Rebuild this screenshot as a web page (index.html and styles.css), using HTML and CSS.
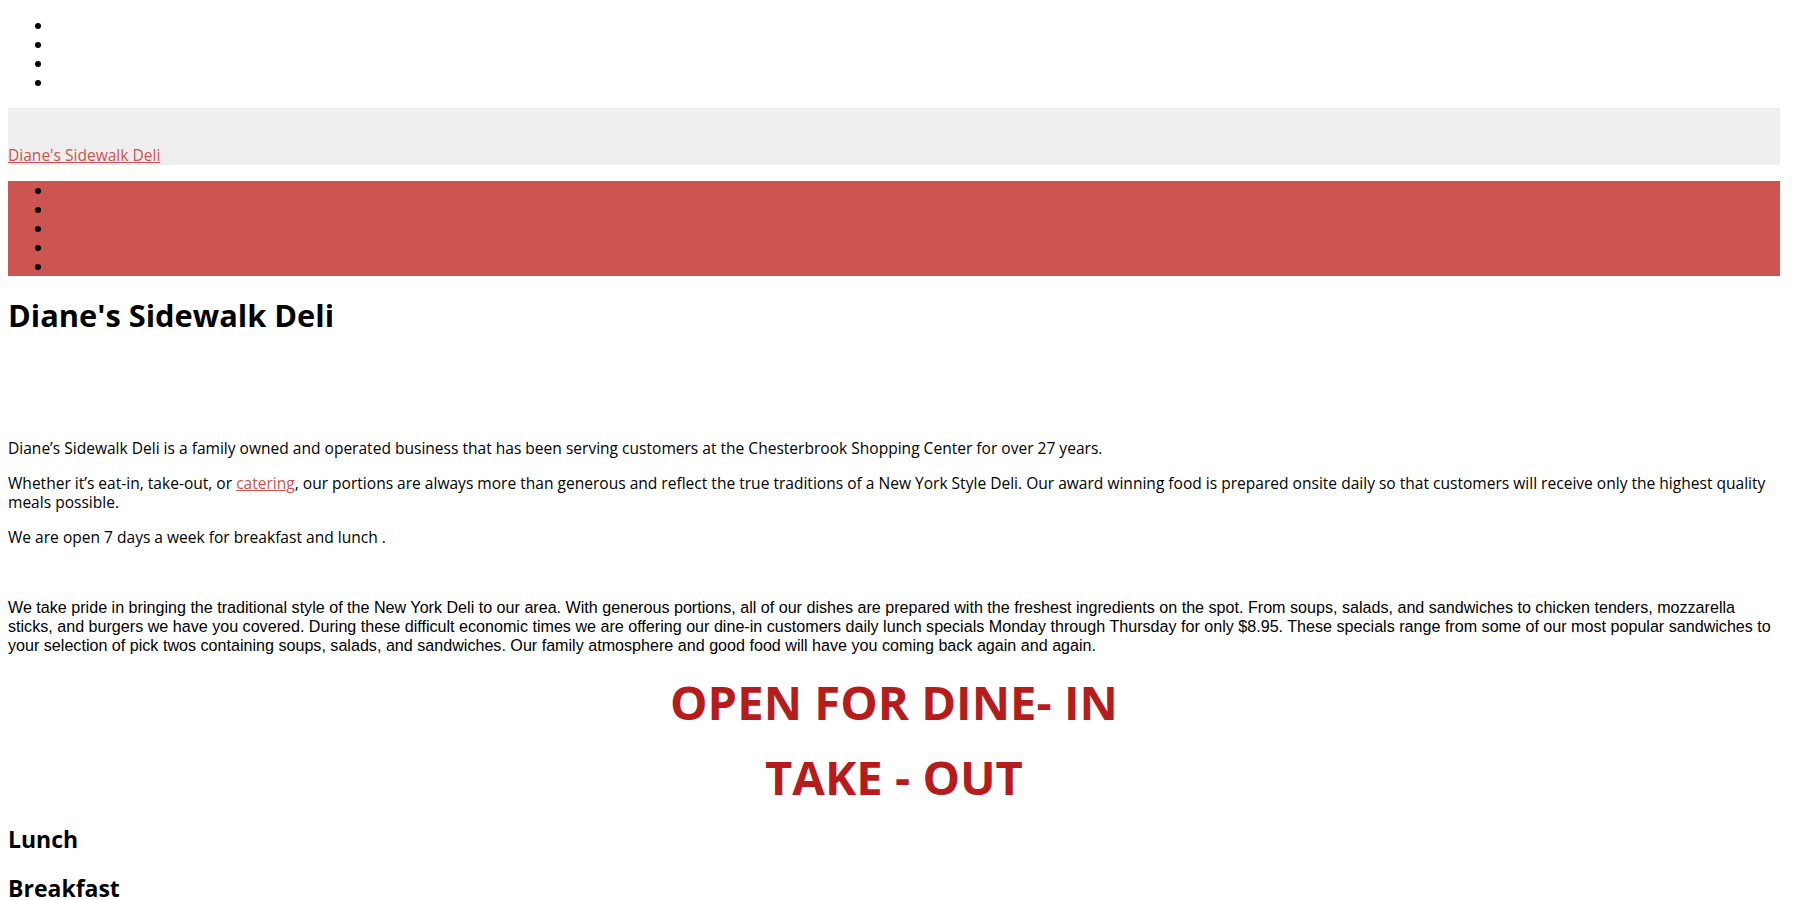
FILE: index.html
```html
<!DOCTYPE html>
<html lang="en">
<head>
<meta charset="utf-8">
<title>Diane's Sidewalk Deli</title>
<link rel="stylesheet" href="styles.css">
</head>
<body>
<div class="page">
  <ul class="top-links">
    <li></li>
    <li></li>
    <li></li>
    <li></li>
  </ul>
  <header class="masthead">
    <a class="brand" href="#">Diane's Sidewalk Deli</a>
  </header>
  <ul class="main-nav">
    <li></li>
    <li></li>
    <li></li>
    <li></li>
    <li></li>
  </ul>
  <main class="content">
    <h1 class="title">Diane's Sidewalk Deli</h1>
    <div class="spacer"></div>
    <p class="text">Diane’s Sidewalk Deli is a family owned and operated business that has been serving customers at the Chesterbrook Shopping Center for over 27 years.</p>
    <p class="text">Whether it’s eat-in, take-out, or <a class="link" href="#">catering</a>, our portions are always more than generous and reflect the true traditions of a New York Style Deli. Our award winning food is prepared onsite daily so that customers will receive only the highest quality meals possible.</p>
    <p class="text">We are open 7 days a week for breakfast and lunch .</p>
    <p class="text">&nbsp;</p>
    <p class="text arial">We take pride in bringing the traditional style of the New York Deli to our area. With generous portions, all of our dishes are prepared with the freshest ingredients on the spot. From soups, salads, and sandwiches to chicken tenders, mozzarella sticks, and burgers we have you covered. During these difficult economic times we are offering our dine-in customers daily lunch specials Monday through Thursday for only $8.95. These specials range from some of our most popular sandwiches to your selection of pick twos containing soups, salads, and sandwiches. Our family atmosphere and good food will have you coming back again and again.</p>
    <h2 class="banner">OPEN FOR DINE- IN</h2>
    <h2 class="banner">TAKE - OUT</h2>
    <h2 class="menu-head">Lunch</h2>
    <h2 class="menu-head">Breakfast</h2>
  </main>
</div>
</body>
</html>
```
FILE: styles.css
```css
html, body {
  background: #ffffff;
}
body {
  margin: 0 8px 8px;
  color: #000000;
  font-family: "Open Sans", "Noto Sans", sans-serif;
  font-size: 15.55px;
  line-height: 19px;
}
.page {
  width: 1772px;
}
.top-links {
  margin: 16px 0;
  padding-left: 45px;
  line-height: 19px;
}
.top-links li {
  height: 19px;
}
.masthead {
  background: #eeeeee;
  padding-top: 38px;
  margin: 0 0 16px;
  line-height: 19px;
}
.brand {
  color: #cc5451;
  text-decoration: underline;
}
.main-nav {
  background: #cc5451;
  margin: 16px 0;
  padding-left: 45px;
}
.main-nav li {
  height: 19px;
}
.title {
  font-size: 30.8px;
  font-weight: 700;
  line-height: 36.8px;
  margin: 21.44px 0;
}
.spacer {
  height: 67px;
}
.text {
  margin: 16px 0;
  line-height: 19px;
}
.link {
  color: #cc5451;
  text-decoration: underline;
}
.arial {
  font-family: "Liberation Sans", Arial, sans-serif;
  font-size: 16.12px;
}
.banner {
  text-align: center;
  color: #b71c1c;
  font-size: 47.2px;
  font-weight: 700;
  line-height: 55.2px;
  margin: 19.92px 0;
}
.menu-head {
  font-size: 23px;
  font-weight: 700;
  line-height: 29px;
  margin: 19.92px 0;
}
```
